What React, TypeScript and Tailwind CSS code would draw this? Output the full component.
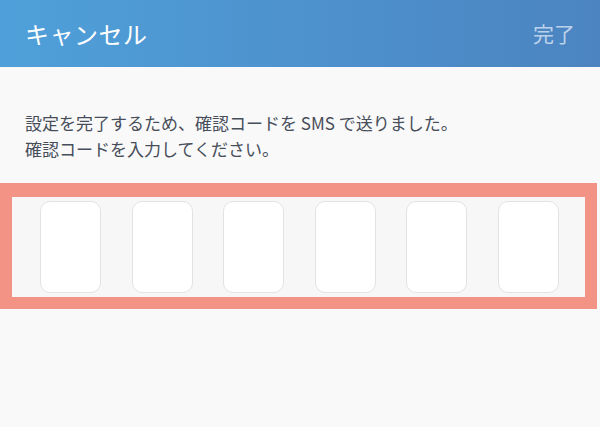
import React from "react";

const slots = [0, 1, 2, 3, 4, 5];

const App = () => {
  return (
    <div
      className="w-[600px] h-[427px] bg-[#f9f9f9] overflow-hidden"
      style={{ fontFamily: '"Noto Sans CJK JP", "Noto Sans", sans-serif' }}
    >
      <div className="flex items-center justify-between h-[67px] px-[25px] bg-gradient-to-r from-[#4fa0da] to-[#4b84c1]">
        <span className="text-[24px] text-white tracking-[0.5px]">キャンセル</span>
        <span className="text-[21px] text-[#bcd2ea]">完了</span>
      </div>

      <div className="pt-[43px] px-[25px] text-[17px] leading-[26px] text-[#474d59]">
        <p>設定を完了するため、確認コードを SMS で送りました。</p>
        <p>確認コードを入力してください。</p>
      </div>

      <div className="mt-[21px] w-[597px] h-[126px] border-[12px] border-t-[14px] border-[#f29385] bg-[#f7f7f7] flex items-center justify-between pl-[28px] pr-[26px]">
        {slots.map((i) => (
          <div
            key={i}
            className="w-[61px] h-[92px] bg-white border border-[#e3e3e3] rounded-[10px]"
          />
        ))}
      </div>
    </div>
  );
};

export default App;
